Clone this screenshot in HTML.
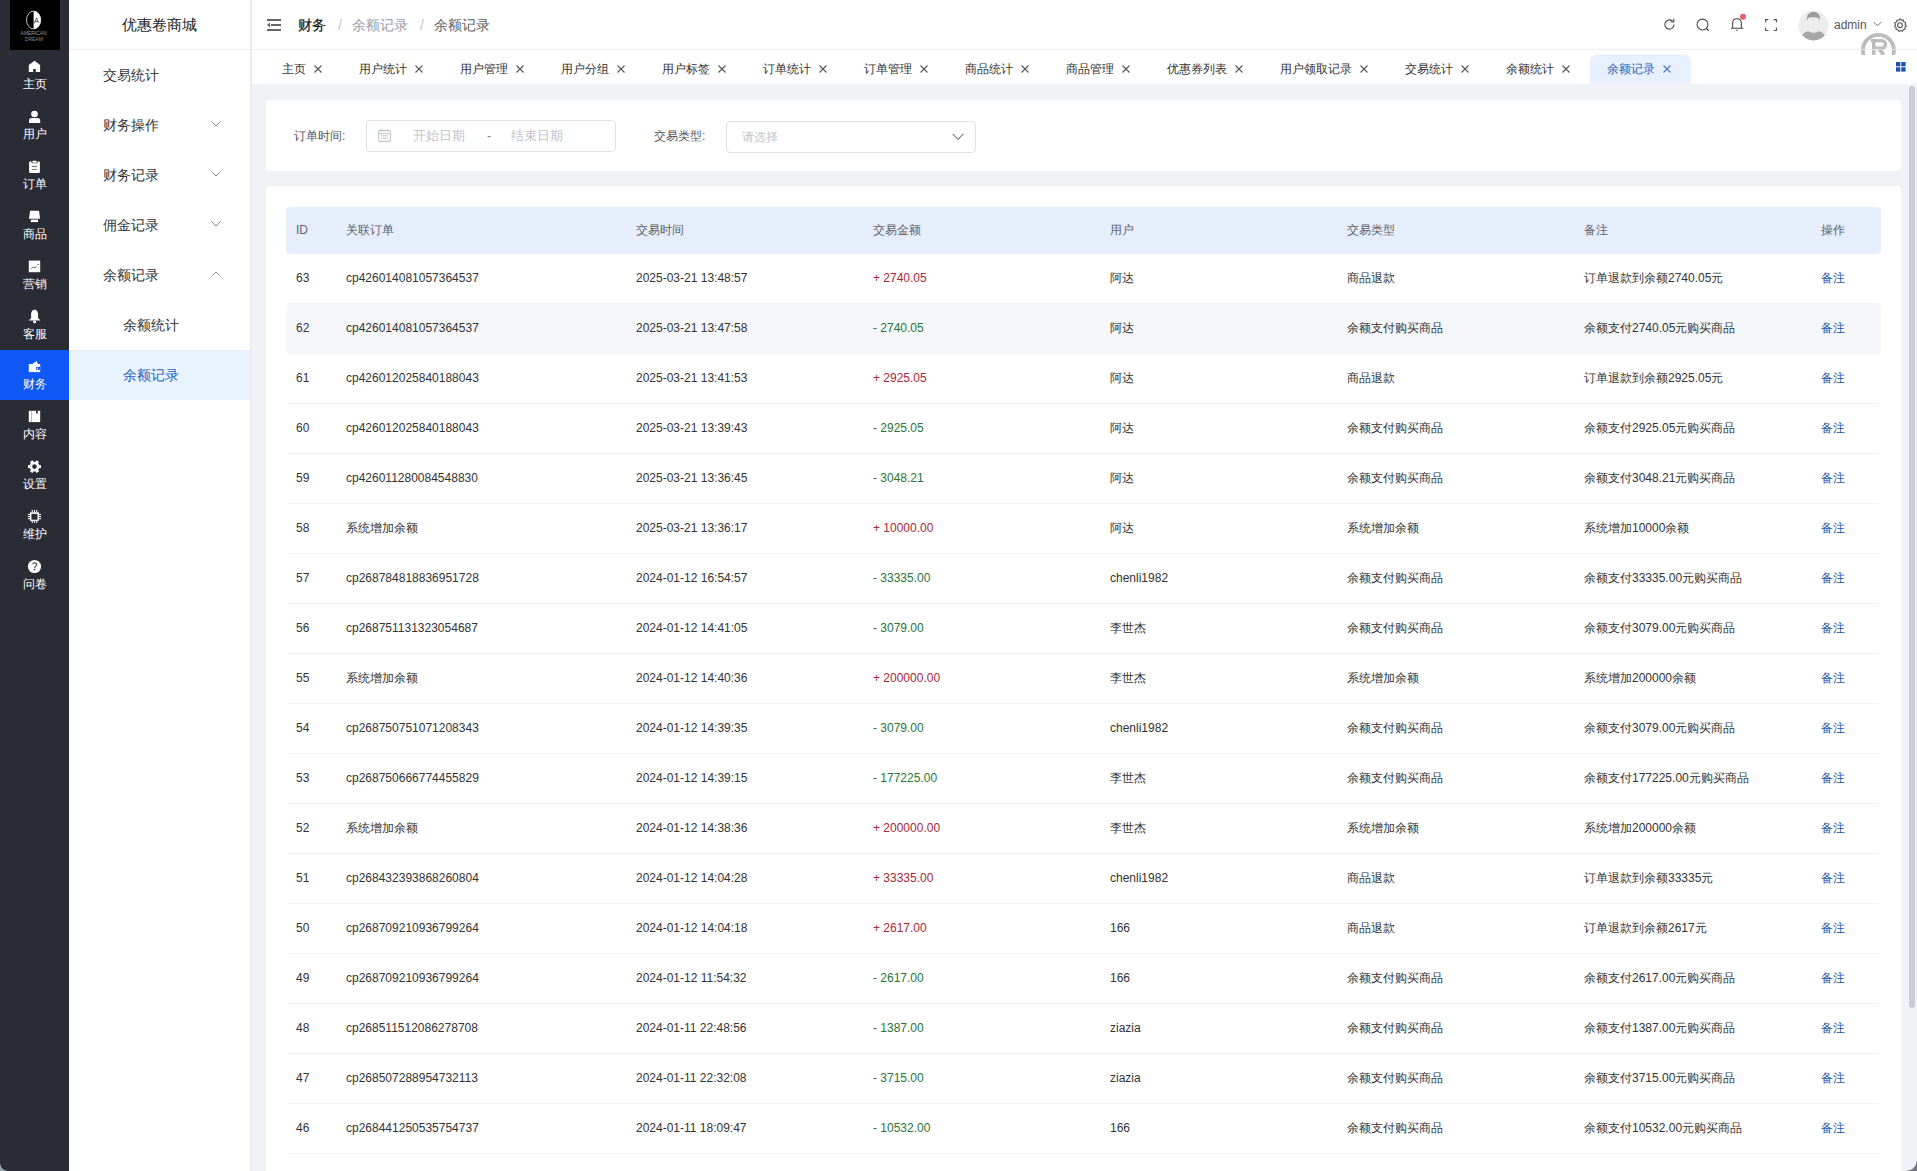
<!DOCTYPE html>
<html><head><meta charset="utf-8">
<style>
*{box-sizing:border-box;margin:0;padding:0}
html,body{width:1917px;height:1171px;overflow:hidden;background:#f0f2f5;font-family:"Liberation Sans",sans-serif;color:#333}
.abs{position:absolute}
#nav{position:absolute;left:0;top:0;width:69px;height:1171px;background:#292c35}
#logo{position:absolute;left:10px;top:0;width:50px;height:50px;background:#000}
.ni{position:absolute;left:0;width:69px;height:50px;color:#fff;text-align:center}
.ni.on{background:#0f58f5}
.ni svg{position:absolute;left:24px;top:6px;width:22px;height:20px}
.ni span{position:absolute;left:0;width:69px;top:26px;font-size:12px;line-height:16px;font-weight:500}
#side{position:absolute;left:69px;top:0;width:181px;height:1171px;background:#fff}
#strip{position:absolute;left:250px;top:0;width:2px;height:1171px;background:linear-gradient(90deg,#e6e8e9,#eceeef);z-index:6}
#side .hd{position:absolute;left:0;top:0;width:181px;height:50px;border-bottom:1px solid #eceef1;font-size:15px;line-height:50px;text-align:center;color:#222}
.mi{position:absolute;left:0;width:181px;height:50px;font-size:14px;line-height:50px;color:#333;padding-left:34px}
.mi.sub{padding-left:54px}
.mi.on{background:#e8f3fe;color:#2563b8}
.mi svg{position:absolute;left:142px;top:21px;width:10px;height:6px}
#hdr{position:absolute;left:250px;top:0;width:1667px;height:50px;background:#fff;border-bottom:1px solid #eceef1}
#tabs{position:absolute;left:250px;top:50px;width:1667px;height:34px;background:#fff}
.tab{position:absolute;top:4px;height:30px;font-size:12px;line-height:28px;color:#333;padding-left:18px}
.tab i{position:absolute;top:10px;width:8px;height:8px}
.card{position:absolute;background:#fff;border-radius:4px}
.lbl{position:absolute;font-size:12px;color:#555;line-height:16px}
.inp{position:absolute;border:1px solid #dfe1e4;border-radius:4px;background:#fff}
.ph{position:absolute;font-size:13px;color:#c0c4cc;line-height:16px}
#th{position:absolute;left:286px;top:207px;width:1595px;height:47px;background:#e6eefc;border-radius:4px;font-size:12px;color:#606266}
#th span{position:absolute;top:15px;line-height:16px}
.tr{position:absolute;left:286px;width:1595px;height:50px;font-size:12px;color:#333}
.tr::after{content:"";position:absolute;left:2px;right:2px;bottom:0;height:1px;background:#f2f2f2}
.tr.alt{background:#f5f7fa;border-radius:4px}
.tr.alt::after{background:#f3f4f6}
.tr span{position:absolute;top:16px;line-height:16px;white-space:nowrap}
.c0{left:10px}.c1{left:60px}.c2{left:350px}.c3{left:587px}.c4{left:824px}.c5{left:1061px}.c6{left:1298px}.c7{left:1535px;color:#1a56a8}
.up{color:#a82838}.dn{color:#2b7536}
</style></head><body>
<div id="nav">
  <div id="logo"><svg width="50" height="50" viewBox="0 0 50 50"><ellipse cx="23.6" cy="20" rx="7.1" ry="8.9" fill="none" stroke="#eee" stroke-width="0.8"/><path d="M23.6 11.1A7.1 8.9 0 0 1 23.6 28.9Z" fill="#fff"/><path d="M24.4 22.8L26.5 17.8L28.6 22.8M24.9 21.6H28.1" stroke="#222" stroke-width="0.7" fill="none"/><text x="23.6" y="35" font-size="5.2" text-anchor="middle" fill="#9a9a9a" font-family="Liberation Sans" textLength="26" lengthAdjust="spacingAndGlyphs">AMERICAN</text><text x="23.8" y="41.4" font-size="5.4" text-anchor="middle" fill="#8a8a8a" font-family="Liberation Sans" textLength="18" lengthAdjust="spacingAndGlyphs">DREAM</text></svg></div>
  <div class="ni" style="top:50px"><svg viewBox="0 0 22 20"><path d="M10.5 4.8L16.1 9V16.1H11.8V13H9.2V16.1H4.8V9Z" fill="#fff"/></svg><span>主页</span></div>
  <div class="ni" style="top:100px"><svg viewBox="0 0 22 20"><circle cx="10.5" cy="8" r="3.3" fill="#fff"/><path d="M5 17.1V14.4Q5 11.9 7.6 11.9H13.6Q16.2 11.9 16.2 14.4V17.1Z" fill="#fff"/></svg><span>用户</span></div>
  <div class="ni" style="top:150px"><svg viewBox="0 0 22 20"><rect x="5.1" y="5.6" width="10.8" height="11.3" rx="1" fill="#fff"/><rect x="7.6" y="4.2" width="5.8" height="3" fill="#292c35"/><rect x="8.3" y="4.8" width="4.4" height="1.9" rx="0.6" fill="#fff"/><rect x="7.9" y="9.9" width="5.3" height="1" fill="#666"/><rect x="7.9" y="13" width="5.3" height="1" fill="#888"/></svg><span>订单</span></div>
  <div class="ni" style="top:200px"><svg viewBox="0 0 22 20"><path d="M6 4.8H15L16.1 12.8H5Z" fill="#fff"/><rect x="6.8" y="13.6" width="7.2" height="2.5" fill="#fff"/></svg><span>商品</span></div>
  <div class="ni" style="top:250px"><svg viewBox="0 0 22 20"><rect x="4.8" y="4.6" width="11.4" height="11.6" fill="#fff"/><path d="M7.3 12.7L9.2 11.1L10.9 11.6L12.6 10.4M13.3 8.4H14.9" stroke="#666" stroke-width="1" fill="none"/></svg><span>营销</span></div>
  <div class="ni" style="top:300px"><svg viewBox="0 0 22 20"><path d="M10.6 3.8C8 3.8 7.1 6.3 7.1 9V12L4.7 14.6H16.5L14.1 12V9C14.1 6.3 13.2 3.8 10.6 3.8Z" fill="#fff"/><circle cx="10.6" cy="15.8" r="1.5" fill="#fff"/></svg><span>客服</span></div>
  <div class="ni on" style="top:350px"><svg viewBox="0 0 22 20"><rect x="4.8" y="8" width="11.4" height="8.1" fill="#fff"/><path d="M8.4 8L12.6 5.1L13.8 8Z" fill="#fff"/><rect x="12" y="10.9" width="4.2" height="2.8" fill="#0a4fd8"/><circle cx="13.4" cy="12.3" r="0.75" fill="#fff"/></svg><span>财务</span></div>
  <div class="ni" style="top:400px"><svg viewBox="0 0 22 20"><rect x="4.8" y="4.8" width="11.4" height="11.3" fill="#fff"/><rect x="7.3" y="4.8" width="0.7" height="11.3" fill="#999"/><path d="M11.8 4.8H13.9L13.5 8.3L12.4 7.5Z" fill="#292c35"/></svg><span>内容</span></div>
  <div class="ni" style="top:450px"><svg viewBox="0 0 22 20"><g fill="#fff" transform="translate(10.5 10.6)"><rect x="-6.5" y="-1.5" width="13" height="3"/><rect x="-6.5" y="-1.5" width="13" height="3" transform="rotate(60)"/><rect x="-6.5" y="-1.5" width="13" height="3" transform="rotate(120)"/><circle r="4.9"/></g><circle cx="10.5" cy="10.6" r="2.3" fill="#292c35"/></svg><span>设置</span></div>
  <div class="ni" style="top:500px"><svg viewBox="0 0 22 20"><rect x="6" y="6.3" width="8.9" height="8.6" fill="#fff"/><rect x="7.4" y="7.9" width="6.1" height="5.8" fill="#292c35"/><g fill="#fff"><rect x="7.7" y="3.9" width="1.1" height="2.6"/><rect x="9.95" y="3.9" width="1.1" height="2.6"/><rect x="12.2" y="3.9" width="1.1" height="2.6"/><rect x="7.7" y="14.7" width="1.1" height="2.2"/><rect x="9.95" y="14.7" width="1.1" height="2.2"/><rect x="12.2" y="14.7" width="1.1" height="2.2"/><rect x="3.9" y="7.9" width="2.3" height="1.1"/><rect x="3.9" y="10" width="2.3" height="1.1"/><rect x="3.9" y="12.1" width="2.3" height="1.1"/><rect x="14.8" y="7.9" width="2.3" height="1.1"/><rect x="14.8" y="10" width="2.3" height="1.1"/><rect x="14.8" y="12.1" width="2.3" height="1.1"/></g></svg><span>维护</span></div>
  <div class="ni" style="top:550px"><svg viewBox="0 0 22 20"><circle cx="10.5" cy="10.5" r="6.6" fill="#fff"/><path d="M8.7 8.2C8.9 6.6 12.7 6.4 12.7 8.6C12.7 10 10.6 10.3 10.6 11.9" stroke="#555" stroke-width="1.3" fill="none"/><circle cx="10.5" cy="13.6" r="0.8" fill="#333"/></svg><span>问卷</span></div>
</div>
<div id="side">
  <div class="hd">优惠卷商城</div>
  <div class="mi" style="top:50px">交易统计</div>
  <div class="mi" style="top:100px">财务操作<svg viewBox="0 0 10 6"><path d="M0.5 0.5L5 5L9.5 0.5" stroke="#888" stroke-width="1" fill="none"/></svg></div>
  <div class="mi" style="top:150px">财务记录<svg viewBox="0 0 10 6"><path d="M0.5 0.5L5 5L9.5 0.5" stroke="#888" stroke-width="1" fill="none"/></svg></div>
  <div class="mi" style="top:200px">佣金记录<svg viewBox="0 0 10 6"><path d="M0.5 0.5L5 5L9.5 0.5" stroke="#888" stroke-width="1" fill="none"/></svg></div>
  <div class="mi" style="top:250px">余额记录<svg viewBox="0 0 10 6"><path d="M0.5 5.5L5 1L9.5 5.5" stroke="#999" stroke-width="1" fill="none"/></svg></div>
  <div class="mi sub" style="top:300px">余额统计</div>
  <div class="mi sub on" style="top:350px">余额记录</div>
</div>
<div id="strip"></div>
<div id="hdr">
  <svg class="abs" style="left:17px;top:19px" width="14" height="12" viewBox="0 0 14 12"><g fill="#666"><rect x="0" y="0" width="14" height="2"/><rect x="4" y="5" width="10" height="2"/><rect x="0" y="10" width="14" height="2"/><path d="M0 6L3 3.5V8.5Z"/></g></svg>
  <div class="abs" style="left:48px;top:17px;font-size:14px;line-height:16px;font-weight:500;color:#1a1a1a;-webkit-text-stroke:0.25px #1a1a1a">财务</div>
  <div class="abs" style="left:88px;top:17px;font-size:14px;line-height:16px;color:#c0c4cc">/</div>
  <div class="abs" style="left:102px;top:17px;font-size:14px;line-height:16px;color:#97a0a8">余额记录</div>
  <div class="abs" style="left:170px;top:17px;font-size:14px;line-height:16px;color:#c0c4cc">/</div>
  <div class="abs" style="left:184px;top:17px;font-size:14px;line-height:16px;color:#606266">余额记录</div>
  <svg class="abs" style="left:1413px;top:18px" width="13" height="13" viewBox="0 0 13 13"><path d="M11 6.5A4.6 4.6 0 1 1 9.6 3.2" stroke="#444" stroke-width="1.05" fill="none"/><path d="M10.8 0.8V4H7.6" stroke="#444" stroke-width="1.05" fill="none"/></svg>
  <svg class="abs" style="left:1446px;top:18px" width="14" height="14" viewBox="0 0 14 14"><circle cx="6.5" cy="6.5" r="5.4" stroke="#444" stroke-width="1.05" fill="none"/><path d="M10.5 10.5L12.8 12.8" stroke="#444" stroke-width="1.1"/></svg>
  <svg class="abs" style="left:1480px;top:12px" width="18" height="20" viewBox="0 0 18 20"><path d="M1 16.3H13.4M2.6 16.3V11.5C2.6 8.5 4.6 6.8 7 6.8S11.4 8.5 11.4 11.5V16.3" stroke="#444" stroke-width="1.05" fill="none"/><circle cx="7" cy="18.3" r="0.75" fill="#444"/><circle cx="13" cy="4.8" r="3" fill="#e0646a"/></svg>
  <svg class="abs" style="left:1515px;top:19px" width="12" height="12" viewBox="0 0 12 12"><path d="M0.6 3.4V0.6H3.4M8.6 0.6H11.4V3.4M11.4 8.6V11.4H8.6M3.4 11.4H0.6V8.6" stroke="#555" stroke-width="1.05" fill="none"/></svg>
  <svg class="abs" style="left:1548px;top:10px" width="31" height="31" viewBox="0 0 31 31"><defs><clipPath id="av"><circle cx="15.5" cy="15.5" r="15"/></clipPath></defs><circle cx="15.5" cy="15.5" r="15" fill="#ededed"/><g clip-path="url(#av)"><path d="M1.5 31C3 25 7 21.2 10.5 21.2Q15.5 24.5 20.5 21.2C24 21.2 28 25 29.5 31Z" fill="#a6a6a6"/><path d="M9 11C8.3 4.5 11.5 2 15.5 2S22.7 4.5 22 11L21 8.2C19 6.8 12 6.8 10 8.2Z" fill="#9a9a9a"/></g></svg>
  <div class="abs" style="left:1584px;top:17px;font-size:12px;line-height:16px;color:#555">admin</div>
  <svg class="abs" style="left:1623px;top:21px" width="9" height="6" viewBox="0 0 9 6"><path d="M0.5 0.8L4.5 4.8L8.5 0.8" stroke="#777" stroke-width="1" fill="none"/></svg>
  <svg class="abs" style="left:1643px;top:18px" width="14" height="14" viewBox="0 0 14 14"><path d="M7 0.8L8.3 2.2L10.2 1.9L10.7 3.7L12.5 4.4L12.2 6.3L13.3 7.8L12 9.2L12.2 11.1L10.3 11.5L9.5 13.2L7.7 12.6L6 13.4L5 11.7L3.1 11.5L3.1 9.6L1.6 8.3L2.5 6.6L1.8 4.8L3.6 4.1L4 2.2L5.9 2.3Z" stroke="#555" stroke-width="1.1" fill="none" stroke-linejoin="round"/><circle cx="7" cy="7.2" r="2.4" stroke="#555" stroke-width="1.1" fill="none"/></svg>
</div>

<div id="tabs">
<div class="abs" style="left:32px;top:11px;font-size:12px;line-height:16px;color:#333;white-space:nowrap">主页</div><svg class="abs" style="left:64px;top:15px" width="8" height="8" viewBox="0 0 8 8"><path d="M0.5 0.5L7.5 7.5M7.5 0.5L0.5 7.5" stroke="#555" stroke-width="1.1"/></svg>
<div class="abs" style="left:109px;top:11px;font-size:12px;line-height:16px;color:#333;white-space:nowrap">用户统计</div><svg class="abs" style="left:165px;top:15px" width="8" height="8" viewBox="0 0 8 8"><path d="M0.5 0.5L7.5 7.5M7.5 0.5L0.5 7.5" stroke="#555" stroke-width="1.1"/></svg>
<div class="abs" style="left:210px;top:11px;font-size:12px;line-height:16px;color:#333;white-space:nowrap">用户管理</div><svg class="abs" style="left:266px;top:15px" width="8" height="8" viewBox="0 0 8 8"><path d="M0.5 0.5L7.5 7.5M7.5 0.5L0.5 7.5" stroke="#555" stroke-width="1.1"/></svg>
<div class="abs" style="left:311px;top:11px;font-size:12px;line-height:16px;color:#333;white-space:nowrap">用户分组</div><svg class="abs" style="left:367px;top:15px" width="8" height="8" viewBox="0 0 8 8"><path d="M0.5 0.5L7.5 7.5M7.5 0.5L0.5 7.5" stroke="#555" stroke-width="1.1"/></svg>
<div class="abs" style="left:412px;top:11px;font-size:12px;line-height:16px;color:#333;white-space:nowrap">用户标签</div><svg class="abs" style="left:468px;top:15px" width="8" height="8" viewBox="0 0 8 8"><path d="M0.5 0.5L7.5 7.5M7.5 0.5L0.5 7.5" stroke="#555" stroke-width="1.1"/></svg>
<div class="abs" style="left:513px;top:11px;font-size:12px;line-height:16px;color:#333;white-space:nowrap">订单统计</div><svg class="abs" style="left:569px;top:15px" width="8" height="8" viewBox="0 0 8 8"><path d="M0.5 0.5L7.5 7.5M7.5 0.5L0.5 7.5" stroke="#555" stroke-width="1.1"/></svg>
<div class="abs" style="left:614px;top:11px;font-size:12px;line-height:16px;color:#333;white-space:nowrap">订单管理</div><svg class="abs" style="left:670px;top:15px" width="8" height="8" viewBox="0 0 8 8"><path d="M0.5 0.5L7.5 7.5M7.5 0.5L0.5 7.5" stroke="#555" stroke-width="1.1"/></svg>
<div class="abs" style="left:715px;top:11px;font-size:12px;line-height:16px;color:#333;white-space:nowrap">商品统计</div><svg class="abs" style="left:771px;top:15px" width="8" height="8" viewBox="0 0 8 8"><path d="M0.5 0.5L7.5 7.5M7.5 0.5L0.5 7.5" stroke="#555" stroke-width="1.1"/></svg>
<div class="abs" style="left:816px;top:11px;font-size:12px;line-height:16px;color:#333;white-space:nowrap">商品管理</div><svg class="abs" style="left:872px;top:15px" width="8" height="8" viewBox="0 0 8 8"><path d="M0.5 0.5L7.5 7.5M7.5 0.5L0.5 7.5" stroke="#555" stroke-width="1.1"/></svg>
<div class="abs" style="left:917px;top:11px;font-size:12px;line-height:16px;color:#333;white-space:nowrap">优惠券列表</div><svg class="abs" style="left:985px;top:15px" width="8" height="8" viewBox="0 0 8 8"><path d="M0.5 0.5L7.5 7.5M7.5 0.5L0.5 7.5" stroke="#555" stroke-width="1.1"/></svg>
<div class="abs" style="left:1030px;top:11px;font-size:12px;line-height:16px;color:#333;white-space:nowrap">用户领取记录</div><svg class="abs" style="left:1110px;top:15px" width="8" height="8" viewBox="0 0 8 8"><path d="M0.5 0.5L7.5 7.5M7.5 0.5L0.5 7.5" stroke="#555" stroke-width="1.1"/></svg>
<div class="abs" style="left:1155px;top:11px;font-size:12px;line-height:16px;color:#333;white-space:nowrap">交易统计</div><svg class="abs" style="left:1211px;top:15px" width="8" height="8" viewBox="0 0 8 8"><path d="M0.5 0.5L7.5 7.5M7.5 0.5L0.5 7.5" stroke="#555" stroke-width="1.1"/></svg>
<div class="abs" style="left:1256px;top:11px;font-size:12px;line-height:16px;color:#333;white-space:nowrap">余额统计</div><svg class="abs" style="left:1312px;top:15px" width="8" height="8" viewBox="0 0 8 8"><path d="M0.5 0.5L7.5 7.5M7.5 0.5L0.5 7.5" stroke="#555" stroke-width="1.1"/></svg>
<svg class="abs" style="left:1337px;top:4px" width="110" height="30" viewBox="0 0 110 30"><path d="M0 30C3 30 3 28 3 26V8C3 3 6 0.5 11 0.5H96C101 0.5 103.5 3 103.5 8V26C103.5 28 104.5 30 108 30Z" fill="#e8f0fd"/></svg>
<div class="abs" style="left:1357px;top:11px;font-size:12px;line-height:16px;color:#2a64b8;white-space:nowrap">余额记录</div><svg class="abs" style="left:1413px;top:15px" width="8" height="8" viewBox="0 0 8 8"><path d="M0.5 0.5L7.5 7.5M7.5 0.5L0.5 7.5" stroke="#4a78c0" stroke-width="1.1"/></svg>
<svg class="abs" style="left:1646px;top:12px" width="10" height="10" viewBox="0 0 10 10"><g fill="#1f4fb0"><rect x="0" y="0" width="4.3" height="4.3"/><rect x="5.3" y="0" width="4.3" height="4.3"/><rect x="0" y="5.3" width="4.3" height="4.3"/><rect x="5.3" y="5.3" width="4.3" height="4.3"/></g></svg>
</div>
<svg class="abs" style="left:1858px;top:30px;z-index:5" width="40" height="25" viewBox="0 0 40 25"><circle cx="20.4" cy="20.4" r="15.5" stroke="#bdbdbd" stroke-width="3.8" fill="none"/><rect x="14" y="9" width="3.6" height="16" fill="#bdbdbd"/><path d="M12.7 10.6H22.5C26 10.6 27.4 12.3 27.4 14.4S26 18.1 22.5 18.1H16" stroke="#bdbdbd" stroke-width="3.4" fill="none"/><path d="M20.5 17.5L25.5 25" stroke="#bdbdbd" stroke-width="4"/></svg>
<div class="abs" style="left:1850px;top:49px;width:67px;height:1px;background:rgba(236,238,241,0.7);z-index:7"></div>
<div class="card" style="left:266px;top:100px;width:1635px;height:71px">
</div>
<div class="lbl" style="left:294px;top:128px">订单时间:</div>
<div class="inp" style="left:366px;top:120px;width:250px;height:32px"></div>
<svg class="abs" style="left:378px;top:129px" width="13" height="13" viewBox="0 0 13 13"><rect x="0.6" y="1.6" width="11.8" height="10.8" rx="1" stroke="#c0c4cc" stroke-width="1.1" fill="none"/><path d="M0.6 4.6H12.4M3 6.8H10M3 9.2H10M3.5 0V2.5M9.5 0V2.5" stroke="#c0c4cc" stroke-width="1"/></svg>
<div class="ph" style="left:413px;top:128px">开始日期</div>
<div class="ph" style="left:487px;top:128px;color:#888">-</div>
<div class="ph" style="left:511px;top:128px">结束日期</div>
<div class="lbl" style="left:654px;top:128px">交易类型:</div>
<div class="inp" style="left:726px;top:121px;width:250px;height:32px"></div>
<div class="ph" style="left:742px;top:129px;font-size:12px">请选择</div>
<svg class="abs" style="left:952px;top:133px" width="12" height="8" viewBox="0 0 12 8"><path d="M0.7 0.8L6 6.3L11.3 0.8" stroke="#888" stroke-width="1.2" fill="none"/></svg>

<div class="card" style="left:266px;top:186px;width:1635px;height:1000px"></div>
<div id="th"><span style="left:10px">ID</span><span style="left:60px">关联订单</span><span style="left:350px">交易时间</span><span style="left:587px">交易金额</span><span style="left:824px">用户</span><span style="left:1061px">交易类型</span><span style="left:1298px">备注</span><span style="left:1535px">操作</span></div>
<div class="tr" style="top:254px"><span class="c0">63</span><span class="c1">cp426014081057364537</span><span class="c2">2025-03-21 13:48:57</span><span class="c3 up">+ 2740.05</span><span class="c4">阿达</span><span class="c5">商品退款</span><span class="c6">订单退款到余额2740.05元</span><span class="c7">备注</span></div>
<div class="tr alt" style="top:304px"><span class="c0">62</span><span class="c1">cp426014081057364537</span><span class="c2">2025-03-21 13:47:58</span><span class="c3 dn">- 2740.05</span><span class="c4">阿达</span><span class="c5">余额支付购买商品</span><span class="c6">余额支付2740.05元购买商品</span><span class="c7">备注</span></div>
<div class="tr" style="top:354px"><span class="c0">61</span><span class="c1">cp426012025840188043</span><span class="c2">2025-03-21 13:41:53</span><span class="c3 up">+ 2925.05</span><span class="c4">阿达</span><span class="c5">商品退款</span><span class="c6">订单退款到余额2925.05元</span><span class="c7">备注</span></div>
<div class="tr" style="top:404px"><span class="c0">60</span><span class="c1">cp426012025840188043</span><span class="c2">2025-03-21 13:39:43</span><span class="c3 dn">- 2925.05</span><span class="c4">阿达</span><span class="c5">余额支付购买商品</span><span class="c6">余额支付2925.05元购买商品</span><span class="c7">备注</span></div>
<div class="tr" style="top:454px"><span class="c0">59</span><span class="c1">cp426011280084548830</span><span class="c2">2025-03-21 13:36:45</span><span class="c3 dn">- 3048.21</span><span class="c4">阿达</span><span class="c5">余额支付购买商品</span><span class="c6">余额支付3048.21元购买商品</span><span class="c7">备注</span></div>
<div class="tr" style="top:504px"><span class="c0">58</span><span class="c1">系统增加余额</span><span class="c2">2025-03-21 13:36:17</span><span class="c3 up">+ 10000.00</span><span class="c4">阿达</span><span class="c5">系统增加余额</span><span class="c6">系统增加10000余额</span><span class="c7">备注</span></div>
<div class="tr" style="top:554px"><span class="c0">57</span><span class="c1">cp268784818836951728</span><span class="c2">2024-01-12 16:54:57</span><span class="c3 dn">- 33335.00</span><span class="c4">chenli1982</span><span class="c5">余额支付购买商品</span><span class="c6">余额支付33335.00元购买商品</span><span class="c7">备注</span></div>
<div class="tr" style="top:604px"><span class="c0">56</span><span class="c1">cp268751131323054687</span><span class="c2">2024-01-12 14:41:05</span><span class="c3 dn">- 3079.00</span><span class="c4">李世杰</span><span class="c5">余额支付购买商品</span><span class="c6">余额支付3079.00元购买商品</span><span class="c7">备注</span></div>
<div class="tr" style="top:654px"><span class="c0">55</span><span class="c1">系统增加余额</span><span class="c2">2024-01-12 14:40:36</span><span class="c3 up">+ 200000.00</span><span class="c4">李世杰</span><span class="c5">系统增加余额</span><span class="c6">系统增加200000余额</span><span class="c7">备注</span></div>
<div class="tr" style="top:704px"><span class="c0">54</span><span class="c1">cp268750751071208343</span><span class="c2">2024-01-12 14:39:35</span><span class="c3 dn">- 3079.00</span><span class="c4">chenli1982</span><span class="c5">余额支付购买商品</span><span class="c6">余额支付3079.00元购买商品</span><span class="c7">备注</span></div>
<div class="tr" style="top:754px"><span class="c0">53</span><span class="c1">cp268750666774455829</span><span class="c2">2024-01-12 14:39:15</span><span class="c3 dn">- 177225.00</span><span class="c4">李世杰</span><span class="c5">余额支付购买商品</span><span class="c6">余额支付177225.00元购买商品</span><span class="c7">备注</span></div>
<div class="tr" style="top:804px"><span class="c0">52</span><span class="c1">系统增加余额</span><span class="c2">2024-01-12 14:38:36</span><span class="c3 up">+ 200000.00</span><span class="c4">李世杰</span><span class="c5">系统增加余额</span><span class="c6">系统增加200000余额</span><span class="c7">备注</span></div>
<div class="tr" style="top:854px"><span class="c0">51</span><span class="c1">cp268432393868260804</span><span class="c2">2024-01-12 14:04:28</span><span class="c3 up">+ 33335.00</span><span class="c4">chenli1982</span><span class="c5">商品退款</span><span class="c6">订单退款到余额33335元</span><span class="c7">备注</span></div>
<div class="tr" style="top:904px"><span class="c0">50</span><span class="c1">cp268709210936799264</span><span class="c2">2024-01-12 14:04:18</span><span class="c3 up">+ 2617.00</span><span class="c4">166</span><span class="c5">商品退款</span><span class="c6">订单退款到余额2617元</span><span class="c7">备注</span></div>
<div class="tr" style="top:954px"><span class="c0">49</span><span class="c1">cp268709210936799264</span><span class="c2">2024-01-12 11:54:32</span><span class="c3 dn">- 2617.00</span><span class="c4">166</span><span class="c5">余额支付购买商品</span><span class="c6">余额支付2617.00元购买商品</span><span class="c7">备注</span></div>
<div class="tr" style="top:1004px"><span class="c0">48</span><span class="c1">cp268511512086278708</span><span class="c2">2024-01-11 22:48:56</span><span class="c3 dn">- 1387.00</span><span class="c4">ziazia</span><span class="c5">余额支付购买商品</span><span class="c6">余额支付1387.00元购买商品</span><span class="c7">备注</span></div>
<div class="tr" style="top:1054px"><span class="c0">47</span><span class="c1">cp268507288954732113</span><span class="c2">2024-01-11 22:32:08</span><span class="c3 dn">- 3715.00</span><span class="c4">ziazia</span><span class="c5">余额支付购买商品</span><span class="c6">余额支付3715.00元购买商品</span><span class="c7">备注</span></div>
<div class="tr" style="top:1104px"><span class="c0">46</span><span class="c1">cp268441250535754737</span><span class="c2">2024-01-11 18:09:47</span><span class="c3 dn">- 10532.00</span><span class="c4">166</span><span class="c5">余额支付购买商品</span><span class="c6">余额支付10532.00元购买商品</span><span class="c7">备注</span></div>
<div class="abs" style="left:1909px;top:86px;width:6px;height:922px;background:#c9ccd1;border-radius:3px"></div>
<div class="abs" style="left:1907px;top:1161px;width:10px;height:10px;background:radial-gradient(circle at 0 0,rgba(0,0,0,0) 9px,#74787e 10px)"></div>
<div class="abs" style="left:0;top:1164px;width:7px;height:7px;z-index:9;background:radial-gradient(circle at 100% 0,rgba(0,0,0,0) 6px,#9ea6ae 7px)"></div>
</body></html>
